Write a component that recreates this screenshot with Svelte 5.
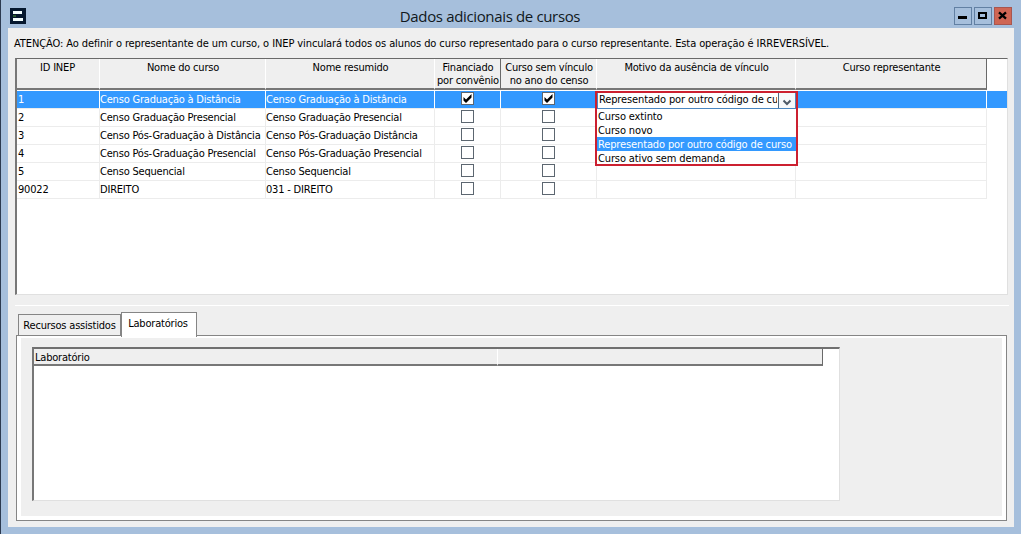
<script lang="ts">
	type Course = { id: string; name: string; short: string; funded: boolean; unlinked: boolean };

	const courses: Course[] = [
		{ id: "1", name: "Censo Graduação à Distância", short: "Censo Graduação à Distância", funded: true, unlinked: true },
		{ id: "2", name: "Censo Graduação Presencial", short: "Censo Graduação Presencial", funded: false, unlinked: false },
		{ id: "3", name: "Censo Pós-Graduação à Distância", short: "Censo Pós-Graduação Distância", funded: false, unlinked: false },
		{ id: "4", name: "Censo Pós-Graduação Presencial", short: "Censo Pós-Graduação Presencial", funded: false, unlinked: false },
		{ id: "5", name: "Censo Sequencial", short: "Censo Sequencial", funded: false, unlinked: false },
		{ id: "90022", name: "DIREITO", short: "031 - DIREITO", funded: false, unlinked: false },
	];
	const reasons = ["Curso extinto", "Curso novo", "Representado por outro código de curso", "Curso ativo sem demanda"];

	let selected = "1";
	let reason = reasons[2];
	let tab = "Laboratórios";
</script>

<div class="window">
	<header class="titlebar">
		<svg class="logo" width="16" height="16" viewBox="0 0 16 16" shape-rendering="crispEdges">
			<rect width="16" height="16" fill="#06182f" />
			<path d="M3 3h9v3H3zM3 10h10v3H3z" fill="#f4ffff" />
			<path d="M3 7h3v2H3z" fill="#285b32" />
		</svg>
		<h1>Dados adicionais de cursos</h1>
		<div class="controls">
			<button aria-label="Minimizar"><svg width="16" height="16" shape-rendering="crispEdges"><path d="M3 8h9v3H3z" /></svg></button>
			<button aria-label="Maximizar"><svg width="16" height="16" shape-rendering="crispEdges"><path d="M3 4h9v7H3zM5 6v3h5V6z" fill-rule="evenodd" /></svg></button>
			<button class="close" aria-label="Fechar"><svg width="16" height="16"><path d="M4 4.300l7 6.400M11 4.300l-7 6.400" stroke="#000" stroke-width="2.300" /></svg></button>
		</div>
	</header>

	<main>
		<p class="notice">ATENÇÃO: Ao definir o representante de um curso, o INEP vinculará todos os alunos do curso representado para o curso representante. Esta operação é IRREVERSÍVEL.</p>

		<div class="grid">
			<div class="row head">
				<div>ID INEP</div>
				<div>Nome do curso</div>
				<div>Nome resumido</div>
				<div class="raised">Financiado<br />por convênio</div>
				<div>Curso sem vínculo<br />no ano do censo</div>
				<div>Motivo da ausência de vínculo</div>
				<div>Curso representante</div>
			</div>
			{#each courses as course}
				<div class="row" class:selected={course.id === selected}>
					<div>{course.id}</div>
					<div class="name">{course.name}</div>
					<div class="name">{course.short}</div>
					<div class="center">
						<span class="check">{#if course.funded}<svg width="11" height="11"><path d="M1.500 4L4 6.500L9.500 1V4.500L4 10L1.500 7.500z" /></svg>{/if}</span>
					</div>
					<div class="center">
						<span class="check">{#if course.unlinked}<svg width="11" height="11"><path d="M1.500 4L4 6.500L9.500 1V4.500L4 10L1.500 7.500z" /></svg>{/if}</span>
					</div>
					<div class="reason">
						{#if course.id === selected}
							<div class="dropdown">
								<div class="combo">
									<span>{reason}</span>
									<button aria-label="Abrir"><svg width="16" height="14"><path d="M4.500 6.500l3.500 3.500L11.500 6.500" fill="none" stroke="#4d5966" stroke-width="2" /></svg></button>
								</div>
								<ul>
									{#each reasons as item}
										<li class:active={item === reason}>{item}</li>
									{/each}
								</ul>
							</div>
						{/if}
					</div>
					<div></div>
				</div>
			{/each}
		</div>

		<div class="splitter"></div>

		<div class="tabs">
			{#each ["Recursos assistidos", "Laboratórios"] as name}
				<button class:open={tab === name} on:click={() => (tab = name)}>{name}</button>
			{/each}
		</div>
		<section class="panel">
			<div class="labs">
				<div class="labs-head">
					<div>Laboratório</div>
					<div></div>
				</div>
			</div>
		</section>
	</main>
</div>

<style>
	:global(body) {
		margin: 0;
		overflow: hidden;
	}

	.window {
		box-sizing: border-box;
		width: 1021px;
		height: 534px;
		padding: 0 7px 7px 7px;
		border-left: 1px solid #2c3a50;
		background: #a6bfdc;
		color: #000;
		font: 11px/13px "DejaVu Sans Condensed", "DejaVu Sans", sans-serif;
		letter-spacing: -0.2px;
		white-space: nowrap;
	}

	button {
		padding: 0;
		border: 0;
		background: none;
		color: inherit;
		font: inherit;
		letter-spacing: inherit;
	}

	svg {
		display: block;
	}

	/* title bar */
	.titlebar {
		display: grid;
		grid-template-columns: 100px 1fr 100px;
		height: 28px;
	}

	.logo {
		margin: 8px 0 0 2px;
	}

	h1 {
		margin: 6px 0 0 -42px;
		text-align: center;
		color: #101820;
		font: 15px/20px "Open Sans", sans-serif;
		letter-spacing: -0.35px;
	}

	.controls {
		display: flex;
		gap: 2px;
		justify-content: flex-end;
		padding: 7px 2px 0 0;
	}

	.controls button {
		box-sizing: border-box;
		width: 18px;
		height: 18px;
		border: 1px solid #6280a3;
	}

	.controls .close {
		border-color: #a8564f;
		background: #cf6654;
	}

	main {
		box-sizing: border-box;
		height: 499px;
		padding: 9px 6px 0 7px;
		background: #efefef;
	}

	.notice {
		margin: 0 0 8px -1px;
		height: 13px;
		letter-spacing: -0.095px;
	}

	/* course grid */
	.grid {
		box-sizing: border-box;
		width: 993px;
		height: 237px;
		border: 1px solid #e0e0e0;
		border-top: 1px solid #696969;
		border-left: 2px solid #777;
		background: #fff;
	}

	.row {
		display: grid;
		grid-template-columns: 83px 166px 169px 66px 96px 199px 191px 20px;
		height: 18px;
	}

	.row > div {
		box-sizing: border-box;
		padding: 2px 0 0 1px;
		border-right: 1px solid #ececec;
		border-bottom: 1px solid #ececec;
	}

	.row > .name {
		padding-left: 0;
	}

	.head {
		height: 32px;
	}

	.head > div {
		height: 31px;
		padding-top: 2px;
		border-right-color: #fff;
		border-bottom: 2px solid #777;
		background: #efefef;
		text-align: center;
	}

	.head > div:first-child {
		padding-right: 2px;
	}

	.head .raised,
	.head > div:last-child {
		border-right-color: #696969;
	}

	.selected {
		height: 18px;
		background: linear-gradient(#3399ff 17px, #fff 17px);
		color: #fff;
	}

	.selected > div {
		border-right-color: #fff;
	}

	.row .center {
		display: flex;
		justify-content: center;
		padding: 1px 0 0 0;
	}

	.check {
		box-sizing: border-box;
		width: 13px;
		height: 13px;
		border: 1px solid #5c6670;
		background: #fff;
	}

	.reason {
		position: relative;
	}

	/* editor that opens over the rows below */
	.dropdown {
		position: absolute;
		top: 0;
		left: -2px;
		z-index: 1;
		box-sizing: border-box;
		width: 203px;
		height: 75px;
		border: 2px solid #cc2030;
		background: #fff;
		color: #000;
		letter-spacing: -0.13px;
	}

	.combo {
		display: flex;
		box-sizing: border-box;
		height: 16px;
		border: 1px solid #4a86c0;
		border-top: 0;
	}

	.combo span {
		flex: 1;
		min-width: 0;
		overflow: hidden;
		margin-right: 1px;
		padding-left: 1px;
	}

	.combo button {
		width: 17px;
		border-left: 1px solid #4d6b85;
		background: #f6f8fa;
	}

	ul {
		margin: 0;
		padding: 0;
		list-style: none;
	}

	li {
		box-sizing: border-box;
		height: 14px;
		padding: 1px 0 0 1px;
	}

	.active {
		background: #3399ff;
		color: #fff;
	}

	.splitter {
		height: 1px;
		margin: 10px -1px 6px 0;
		background: #fff;
	}

	/* tabs */
	.tabs {
		display: flex;
		align-items: flex-end;
		height: 23px;
		padding-left: 3px;
	}

	.tabs button {
		box-sizing: border-box;
		width: 103px;
		height: 21px;
		border: 1px solid #858585;
		border-bottom: 0;
	}

	.tabs .open {
		position: relative;
		width: 76px;
		height: 25px;
		margin-bottom: -2px;
		padding: 0 2px 3px 0;
		background: #fff;
	}

	.panel {
		box-sizing: border-box;
		width: 991px;
		height: 186px;
		margin-left: 1px;
		padding: 10px 11px;
		border: 1px solid #858585;
		background: #efefef;
		box-shadow: inset 4px 0 #fff, inset -4px 0 #fff, inset 0 2px #fff, inset 0 -4px #fff;
	}

	.labs {
		box-sizing: border-box;
		width: 808px;
		height: 154px;
		margin: 1px 0 0 4px;
		border: 1px solid #e0e0e0;
		border-top: 2px solid #707070;
		border-left: 2px solid #777;
		background: #fff;
	}

	.labs-head {
		display: grid;
		grid-template-columns: 464px 325px;
	}

	.labs-head div {
		box-sizing: border-box;
		height: 17px;
		padding: 2px 0 0 1px;
		border-right: 1px solid #fff;
		border-bottom: 2px solid #777;
		background: #efefef;
	}

	.labs-head div:last-child {
		border-right-color: #696969;
	}
</style>
